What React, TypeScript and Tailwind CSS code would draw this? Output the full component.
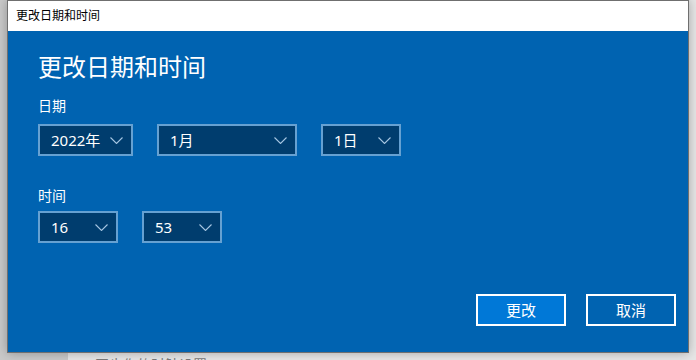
const font = { fontFamily: '"Noto Sans", "Noto Sans CJK SC", sans-serif' };

function Chevron() {
  return (
    <svg width="13" height="7" viewBox="0 0 13 7" className="shrink-0">
      <polyline points="0.5,0.5 6.5,6.5 12.5,0.5" fill="none" stroke="#a6c6e2" strokeWidth="1.1" />
    </svg>
  );
}

function Combo({ value, width }: { value: string; width: string }) {
  return (
    <div
      className={`${width} h-[32px] flex items-center justify-between border-2 border-[#66a1d2] bg-[#003d6e] pl-[11px] pr-[8px] text-[15px] text-white`}
    >
      <span className="leading-none">{value}</span>
      <Chevron />
    </div>
  );
}

export default function App() {
  return (
    <div
      className="relative w-[696px] h-[360px] overflow-hidden flex bg-[#e6e6e6]"
      style={font}
    >
      {/* settings window behind the dialog */}
      <div className="w-[68px] h-full bg-[#c9c9c9]" />
      <div className="flex-1 pt-[355px] pl-[27px] text-[14px] leading-[20px] text-[#7a7a7a] whitespace-nowrap">
        同步你的时钟设置
      </div>

      {/* dialog */}
      <div className="absolute left-[7px] top-0 w-[682px] h-[353px] border border-[#6f6f6f] bg-[#0063b1] flex flex-col shadow-[0_0_10px_rgba(0,0,0,0.28)]">
        <div className="h-[30px] bg-white flex items-center pl-[8px] text-[12px] text-black">
          更改日期和时间
        </div>
        <div className="flex-1 flex flex-col pl-[30px] pr-[12px] text-white">
          <div className="mt-[20px] text-[24px] leading-[32px]">更改日期和时间</div>
          <div className="mt-[13px] text-[14px] leading-[20px]">日期</div>
          <div className="mt-[8px] flex gap-[24px]">
            <Combo value="2022年" width="w-[95px]" />
            <Combo value="1月" width="w-[140px]" />
            <Combo value="1日" width="w-[80px]" />
          </div>
          <div className="mt-[30px] text-[14px] leading-[20px]">时间</div>
          <div className="mt-[5px] flex gap-[24px]">
            <Combo value="16" width="w-[80px]" />
            <Combo value="53" width="w-[80px]" />
          </div>
          <div className="mt-[51px] flex justify-end gap-[20px]">
            <button className="w-[90px] h-[32px] border-2 border-white bg-[#0078d7] text-[15px] text-white">
              更改
            </button>
            <button className="w-[90px] h-[32px] border-2 border-white bg-transparent text-[15px] text-white">
              取消
            </button>
          </div>
        </div>
      </div>
    </div>
  );
}
